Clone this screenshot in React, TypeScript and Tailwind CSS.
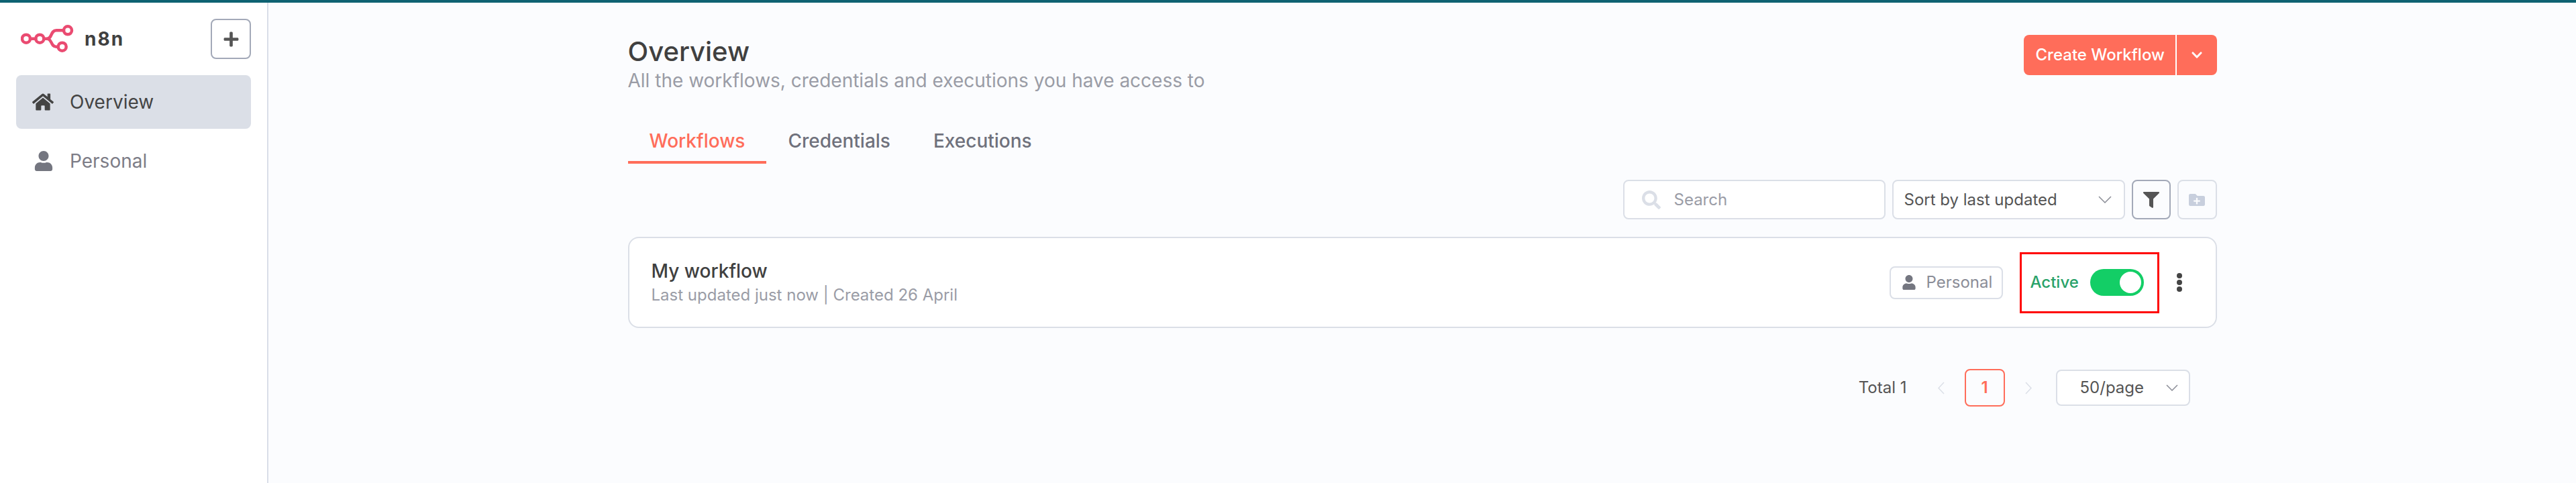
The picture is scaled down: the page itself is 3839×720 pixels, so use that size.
import React from "react";
import { FaHome, FaUser, FaPlus, FaSearch, FaFilter, FaFolderPlus, FaChevronDown } from "react-icons/fa";

function Logo() {
  return (
    <svg width="80" height="42" viewBox="0 0 80 42" fill="none" stroke="#ea4b71" strokeWidth="4.5" className="shrink-0">
      <circle cx="8" cy="20.7" r="6" />
      <circle cx="28.3" cy="20.7" r="6" />
      <circle cx="70" cy="8.3" r="6" />
      <circle cx="61.7" cy="32.7" r="6" />
      <path d="M14 20.7H22.3M34.3 20.7H39C47 20.7 44 8.3 53 8.3H64M39 20.7C47 20.7 44 32.7 53 32.7H55.7" strokeLinecap="round" />
    </svg>
  );
}

function Chevron({ dir, color, w, h }: { dir: "down" | "left" | "right"; color: string; w: number; h: number }) {
  const d = dir === "down" ? `M1 1L${w / 2} ${h - 1}L${w - 1} 1` : dir === "left" ? `M${w - 1} 1L1 ${h / 2}L${w - 1} ${h - 1}` : `M1 1L${w - 1} ${h / 2}L1 ${h - 1}`;
  return (
    <svg width={w} height={h} viewBox={`0 0 ${w} ${h}`} fill="none" stroke={color} strokeWidth="1.5" className="shrink-0">
      <path d={d} />
    </svg>
  );
}

export default function App() {
  return (
    <div className="h-[720px] w-[3839px] overflow-hidden flex flex-col font-['Inter',sans-serif] bg-[#fbfcfe]">
      <div className="h-1 shrink-0 bg-[#0e6272]" />
      <div className="flex flex-1 min-h-0">
        <aside className="w-[400px] shrink-0 bg-white border-r-2 border-[#d9dee8] pl-6 pr-6 pt-6">
          <div className="flex items-center justify-between h-[60px] pl-[7px]">
            <div className="flex items-center gap-[15px]">
              <Logo />
              <span className="text-[28px] font-bold tracking-[2px] text-[#404040] leading-none">n8n</span>
            </div>
            <button className="w-[60px] h-[60px] flex items-center justify-center rounded-lg border-2 border-[#a3a9b8] bg-white text-[#555555]">
              <FaPlus size={25} />
            </button>
          </div>
          <div className="mt-6 h-20 w-[350px] flex items-center rounded-lg bg-[#dbdfe7] pl-6 text-[28px] text-[#444444]">
            <span className="w-[56px] flex"><FaHome size={32} color="#444444" /></span>
            <span>Overview</span>
          </div>
          <div className="mt-[8px] h-20 w-[350px] flex items-center rounded-lg pl-[26px] text-[28px] text-[#7d7d87]">
            <span className="w-[54px] flex"><FaUser size={30} color="#747680" /></span>
            <span>Personal</span>
          </div>
        </aside>
        <main className="flex-1 min-w-0">
          <div className="w-[2368px] mx-auto pt-12">
            <div className="flex justify-between items-start">
              <div>
                <h1 className="pt-px text-[40px] leading-[47px] font-medium text-[#404040]">Overview</h1>
                <p className="text-[28px] leading-10 text-[#9a9ca6]">All the workflows, credentials and executions you have access to</p>
              </div>
              <div className="h-[60px] w-[288px] flex items-center rounded-lg bg-[#ff6d5a] text-white">
                <span className="w-[226px] pl-[18px] text-2xl font-medium">Create Workflow</span>
                <span className="w-0.5 h-full bg-white" />
                <span className="flex-1 flex justify-center"><FaChevronDown size={18} /></span>
              </div>
            </div>
            <div className="mt-[50px] flex text-[28px] leading-10">
              <div className="px-8 pb-[10px] border-b-4 border-[#ff6d5a] text-[#ff6d5a] font-medium">Workflows</div>
              <div className="px-8 pb-[10px] text-[#6f717c] font-medium">Credentials</div>
              <div className="px-8 pb-[10px] text-[#6f717c] font-medium">Executions</div>
            </div>
            <div className="mt-6 flex justify-end gap-[10px] h-[59px]">
              <div className="w-[391px] flex items-center rounded-lg border-2 border-[#dbdfe7] bg-white pl-[26px] gap-[20px] text-2xl text-[#9a9ca6]">
                <FaSearch size={28} color="#dbdfe7" />
                <span>Search</span>
              </div>
              <div className="w-[347px] flex items-center justify-between rounded-lg border-2 border-[#dbdfe7] bg-white pl-4 pr-[18px] text-2xl text-[#555555]">
                <span>Sort by last updated</span>
                <Chevron dir="down" color="#8b8d97" w={20} h={11} />
              </div>
              <div className="w-[58px] flex items-center justify-center rounded-lg border-2 border-[#a3a9b8]">
                <FaFilter size={24} color="#555555" />
              </div>
              <div className="w-[59px] flex items-center justify-center rounded-lg border-2 border-[#dbdfe7]">
                <FaFolderPlus size={24} color="#c8cfdd" />
              </div>
            </div>
            <div className="mt-[26px] h-[136px] flex items-center justify-between rounded-2xl border-2 border-[#dbdfe7] bg-white pl-[33px] pr-[50px]">
              <div>
                <div className="text-[28px] leading-9 font-medium text-[#404040]">My workflow</div>
                <div className="text-2xl leading-[35px] text-[#9a9ca6]">Last updated just now | Created 26 April</div>
              </div>
              <div className="flex items-center">
                <div className="h-[49px] w-[169px] flex items-center gap-[15px] rounded-lg border-2 border-[#dbdfe7] pl-4 text-2xl text-[#8b8d97]">
                  <FaUser size={22} color="#747680" />
                  <span>Personal</span>
                </div>
                <div className="ml-[25px] w-[208px] h-[91px] flex items-center border-[3px] border-[#ff0000] pl-[13px] gap-[17px]">
                  <span className="text-2xl font-medium text-[#29a269]">Active</span>
                  <div className="w-20 h-10 rounded-full bg-[#13ce66] flex items-center justify-end pr-1">
                    <div className="w-8 h-8 rounded-full bg-white" />
                  </div>
                </div>
                <div className="ml-[26px] flex flex-col gap-[2px]">
                  <div className="w-2 h-2 rounded-full bg-[#444444]" />
                  <div className="w-2 h-2 rounded-full bg-[#444444]" />
                  <div className="w-2 h-2 rounded-full bg-[#444444]" />
                </div>
              </div>
            </div>
            <div className="mt-[61px] pr-10 flex justify-end items-center text-2xl text-[#555555]">
              <span>Total 1</span>
              <span className="ml-[46px]"><Chevron dir="left" color="#dbdfe7" w={10} h={19} /></span>
              <div className="ml-[30px] w-[60px] h-[56px] flex items-center justify-center rounded-lg border-2 border-[#ff6d5a] font-semibold text-[#ff6d5a]">1</div>
              <span className="ml-[30px]"><Chevron dir="right" color="#dbdfe7" w={10} h={19} /></span>
              <div className="ml-[36px] w-[200px] h-[54px] flex items-center justify-between rounded-lg border-2 border-[#dbdfe7] bg-white pl-[34px] pr-[16px]">
                <span>50/page</span>
                <Chevron dir="down" color="#8b8d97" w={18} h={10} />
              </div>
            </div>
          </div>
        </main>
      </div>
    </div>
  );
}
